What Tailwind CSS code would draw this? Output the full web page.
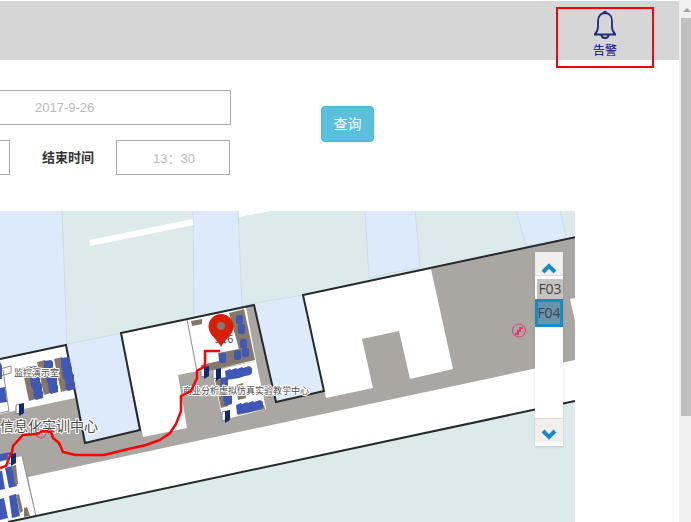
<!DOCTYPE html>
<html lang="zh-CN">
<head>
  <meta charset="UTF-8">
  <title>轨迹查询</title>
  <script src="https://cdn.jsdelivr.net/npm/@tailwindcss/browser@4"></script>
  <style>
    body { font-family: 'Liberation Sans', 'Noto Sans CJK SC', sans-serif; }
  </style>
</head>
<body class="bg-white text-[#333333] flex min-h-screen overflow-hidden">

  <div class="flex-1 min-w-0">

    <!-- Top bar -->
    <header class="h-[60px] border-t border-white bg-[#d6d6d6] flex justify-end items-start pt-[6px] pr-[25px]">
      <a href="#" class="w-[98px] h-[61px] shrink-0 border-2 border-[#ff0000] flex flex-col items-center text-[12px] leading-[16px] text-[#00008b]">
        <svg class="w-[24px] h-[30px] mt-px" viewBox="0 0 24 30" fill="none" stroke="#1c2a80" stroke-width="1.800">
          <path d="M1 24.500h22M2 24c2-2 3-4 3-7v-6c0-5 3-8 7-8s7 3 7 8v6c0 3 1 5 3 7"/>
          <path d="M8.500 25c0 4 7 4 7 0M10.500 2h3"/>
        </svg>
        <span class="mt-[3px]">告警</span>
      </a>
    </header>

    <!-- Search form -->
    <form class="pt-[30px] flex items-start text-[13px]">
      <div class="w-[231px]">
        <input type="text" aria-label="日期" value="2017-9-26" class="block w-full h-[35px] border border-l-0 border-[#a9a9a9] pl-[35px] text-[#bbbbbb]">
        <div class="mt-[15px] flex items-center">
          <input type="text" aria-label="开始时间" class="block w-[10px] h-[35px] border border-l-0 border-[#a9a9a9]">
          <label for="endTime" class="w-[106px] pl-[32px] font-bold">结束时间</label>
          <input id="endTime" type="text" value="13：30" class="block w-[114px] h-[35px] border border-[#a9a9a9] pl-[36px] text-[#bbbbbb]">
        </div>
      </div>
      <button type="button" class="mt-4 ml-[90px] w-[53px] h-9 rounded bg-[#5bc0de] border border-[#46b8da] text-[14px] text-white">查询</button>
    </form>

    <!-- Floor map -->
    <main class="relative mt-9 mr-[104px]">
      <svg class="block w-full" viewBox="0 211 575 311" font-family="'Noto Sans CJK SC', sans-serif">
        <defs>
          <g id="desk">
            <path d="M0 1l8-2 6 33-7 2z" fill="#85776a"/>
            <path d="M7 0l7-1 2 2v6l2 2v6l2 2v6l1 2v6l-7 2-2-2-1-9-2-2-1-9-1-2z" fill="#4058b5"/>
          </g>
          <g id="seats" fill="#4058b5">
            <path d="M0 6l5-2 1 1 5-2 1 1 5-2 1 1 6-2 3 2v5l-2 2-5 1-6 2-6 1-7 1z"/>
          </g>
          <g id="door">
            <path d="M0 2l4-1v9l-4 1z" fill="#fff" stroke="#758099"/>
            <path d="M3 1l5-1v10l-5 3z" fill="#10296f"/>
          </g>
        </defs>

        <!-- ground -->
        <rect y="211" width="575" height="311" fill="#dceaec"/>
        <g fill="#dceafb" stroke="#cddde4">
          <path d="M-2 210H62l5 134 55-11 20 98-60 15-84-80z"/>
          <path d="M193 210h45l4 95 62-10 22 97-50 12-82-86z"/>
          <path d="M365 210h50l5 57-51 11z"/>
          <path d="M516 210h44l7 30-41 6z"/>
        </g>
        <path d="M90 243l103-21" stroke="#fff" stroke-width="6"/>
        <path d="M239 211h32l-32 6z" fill="#fff"/>

        <!-- building -->
        <path d="M0 359l66-14 19 98 55-13-19-97 133-28 22 97 48-11-21-96 274-59V401L10 522H0z" fill="#aaa7a3"/>
        <g fill="#fff">
          <path d="M0 359l66-14 9 53-75 16z"/>
          <path d="M121 333l66-14 11 52-20 4 9 53-44 9z"/>
          <path d="M187 319l59-12 10 54-59 11z"/>
          <path d="M212 371l44-10 10 48-43 11z"/>
          <path d="M303 295l128-26 22 100-43 10-11-48-37 8 11 49-47 10z"/>
          <path d="M28 477l547-117v41L36 516z"/>
          <path d="M0 462l22-6 14 60-26 6H0z"/>
          <path d="M570 299l5-1v23z"/>
        </g>
        <g fill="none" stroke="#928c86">
          <path d="M187 319l10 53M3 370l6 42M0 376l11-3v-7l-11 3M22 456l14 60M0 413l9-2"/>
        </g>
        <g fill="none" stroke="#23292c" stroke-width="2">
          <path d="M0 359l66-14 19 98 55-13-19-97 133-28 22 97 48-11-21-96 273-58M8 522l567-121"/>
        </g>

        <!-- furniture -->
        <use href="#desk" x="22" y="367"/>
        <use href="#desk" x="37" y="361"/>
        <use href="#desk" x="54" y="358"/>
        <g fill="#4058b5">
          <path d="M0 362l2 4v13H0zM0 388l5-1 2 15-7 1zM0 454l12-2 2 6-14 3z"/>
          <path d="M5 468l7-2 5 20-8 2zM9 496l7-2 4 22-8 2zM0 471h2l3 18-5 1zM0 499l4-1 4 20-8 2z"/>
        </g>
        <g fill="#85776a">
          <path d="M12 466l4-1 2 19-3 1zM16 495l3-1 4 17-3 2zM24 508l3-1 3 9-6 1zM191 321l11-2v5l-10 2z"/>
          <path d="M229 313l15-4 11 51-52 12-2-7 18-4-1-8 21-4z"/>
          <path d="M215 380l7-1 6 27-7 2zM236 385l7-2 3 15-8 2zM237 411l27-6 1 4-27 6z"/>
        </g>
        <g fill="#4058b5">
          <rect x="236" y="315" width="7" height="9" rx="2"/>
          <rect x="238" y="324" width="7" height="10" rx="2"/>
          <rect x="240" y="339" width="7" height="9" rx="2"/>
          <rect x="242" y="348" width="7" height="9" rx="2"/>
          <rect x="219" y="353" width="7" height="10" rx="2"/>
          <rect x="234" y="350" width="7" height="10" rx="2"/>
          <path d="M220 378l6-1 2 2v7l2 2v6l2 2v8l-6 2-2-2-1-8-2-2v-6z"/>
        </g>
        <use href="#seats" x="225" y="365"/>
        <use href="#seats" x="236" y="399"/>
        <use href="#door" x="16" y="403"/>
        <use href="#door" x="8" y="453"/>
        <use href="#door" x="201" y="366"/>
        <use href="#door" x="213" y="368"/>
        <use href="#door" x="222" y="410"/>

        <!-- stairs -->
        <g fill="none" stroke="#e8327a">
          <circle cx="519" cy="330.500" r="6.500"/>
          <path d="M515 334h3v-3h2v-3h3" stroke-width="2"/>
          <circle cx="41" cy="433" r="5"/>
        </g>

        <!-- room names -->
        <g fill="#4d4a48" stroke="#fff" stroke-width="2" paint-order="stroke">
          <text x="14" y="376" font-size="9">监控演示室</text>
          <text x="183" y="394" font-size="9">商业分析虚拟仿真实验教学中心</text>
          <text x="0" y="431" font-size="14">信息化实训中心</text>
          <text x="215" y="343" font-size="11">316</text>
        </g>

        <!-- track -->
        <path d="M0 468l6-2 3-8 3-6 1-6 10-11 14-1 6-3 8 1 2 6 6 5 4 9 12 3h29l20-5 22-5 14-5 10-7 6-9 5-13v-15l10-5 6-13v-7l8-5v-15h15" fill="none" stroke="#ff0000" stroke-width="2.500"/>
        <path d="M221 347c-3-7-12.500-12-12.500-20.500a12.500 12.500 0 0 1 25 0c0 8.500-9.500 13.500-12.500 20.500z" fill="#d81e06"/>
        <circle cx="221" cy="326" r="4" fill="#85776a"/>
      </svg>

      <!-- Floor picker -->
      <div class="absolute right-3 top-[41px] w-[28px] h-[194px] bg-white shadow flex flex-col font-['Open_Sans',sans-serif] text-[14px] leading-[20px] text-[#444444]">
        <button type="button" aria-label="上一层" class="h-[24px] bg-[#f0efee] border-b border-[#dddddd] flex items-end justify-center">
          <svg class="w-4 h-4" viewBox="0 0 16 16" fill="none" stroke="#168bc7" stroke-width="4"><path d="M2 13l6-6 6 6"/></svg>
        </button>
        <button type="button" class="mt-[3px] ml-[2px] h-[20px] bg-[#c6c3bf]">F03</button>
        <button type="button" class="h-[28px] bg-[#6595af] border-3 border-[#168bc7] flex items-center justify-center">F04</button>
        <button type="button" aria-label="下一层" class="mt-auto mb-1 h-[24px] bg-[#f0efee] border-t border-[#dddddd] flex items-end justify-center">
          <svg class="w-4 h-4" viewBox="0 0 16 16" fill="none" stroke="#168bc7" stroke-width="4"><path d="M2 5l6 6 6-6"/></svg>
        </button>
      </div>
    </main>
  </div>

  <!-- Scrollbar -->
  <aside class="w-3 shrink-0 bg-[#f0f0f0] flex flex-col pl-[2px]">
    <svg class="w-[10px] h-[18px]" viewBox="0 0 10 18" fill="#a3a3a3"><path d="M2 12l4-4 4 4z"/></svg>
    <div class="h-[398px] bg-[#c0c0c0]"></div>
  </aside>

</body>
</html>
